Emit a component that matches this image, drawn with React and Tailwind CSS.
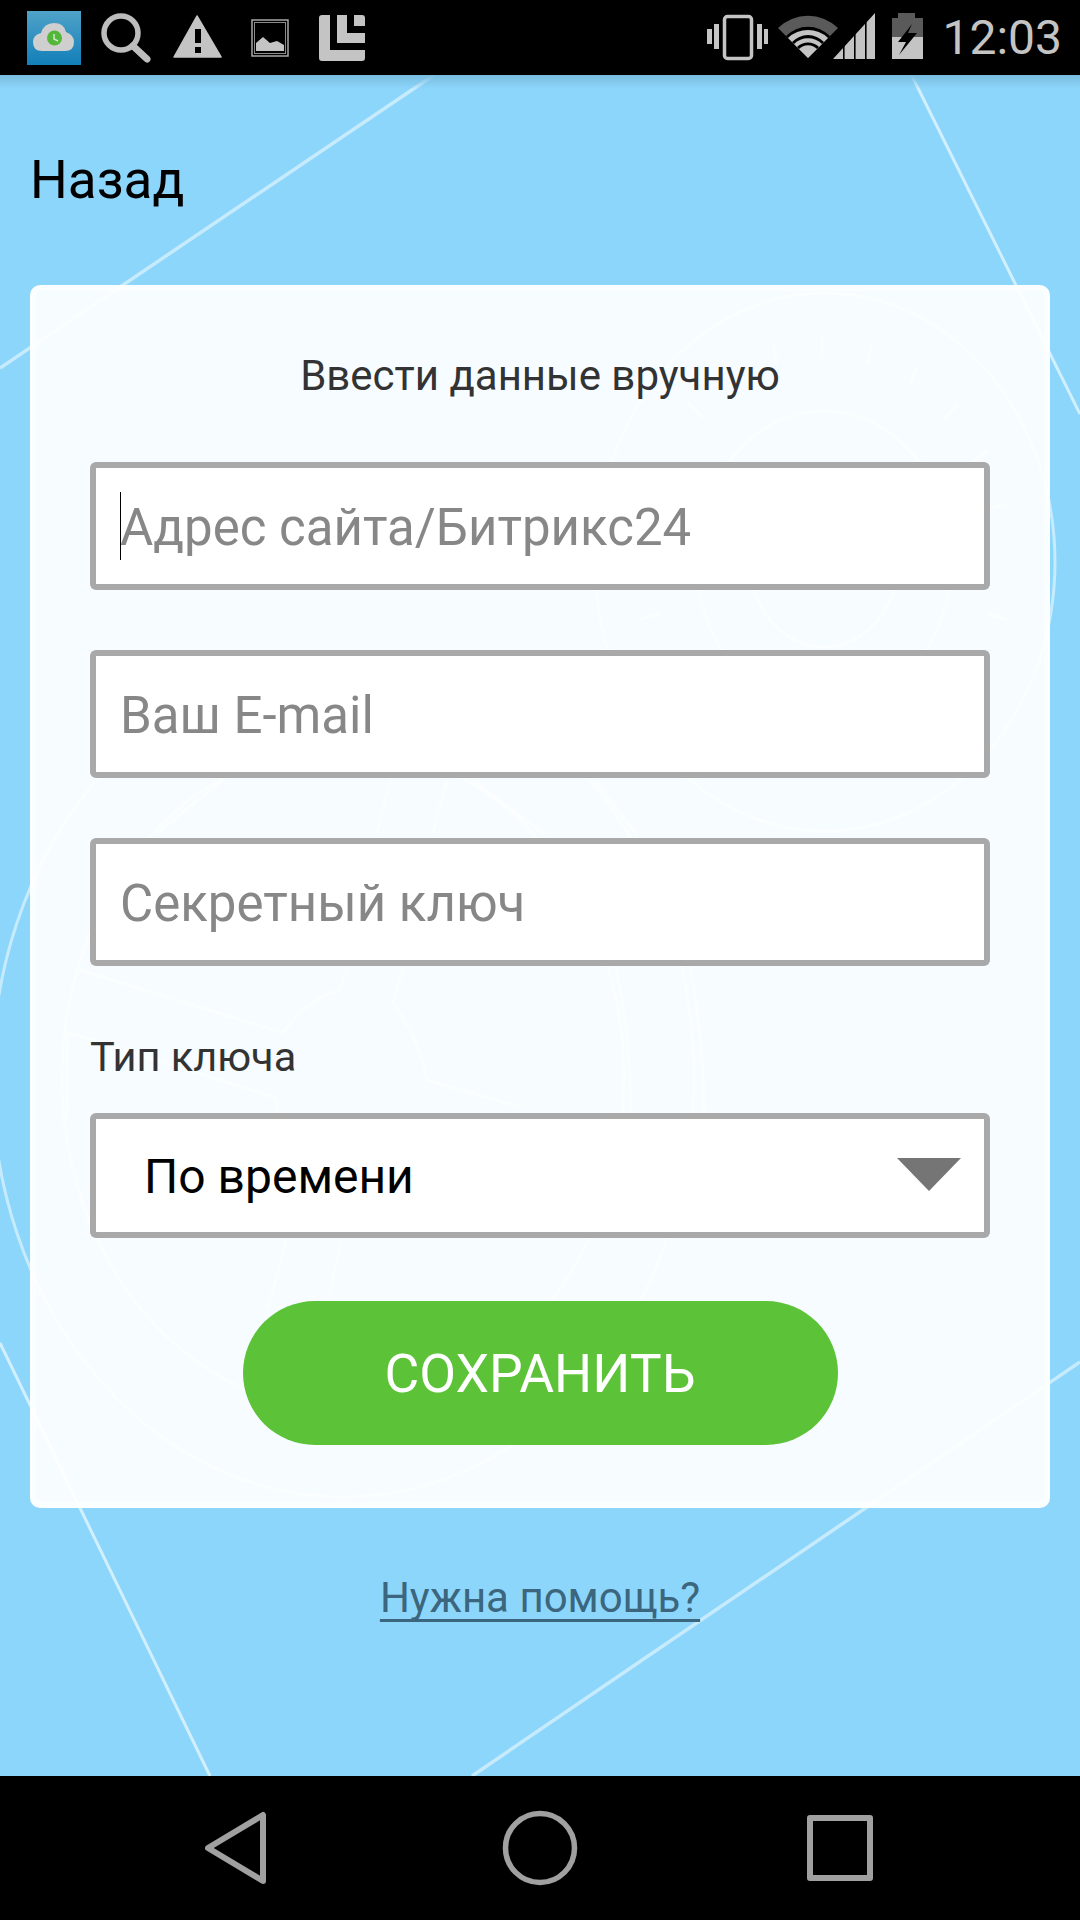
const font = { fontFamily: "Roboto, 'Noto Sans', sans-serif" };

function Background() {
  const ticks = [
    [822, 336, 822, 358], [773, 344, 777, 365], [872, 344, 867, 365], [917, 367, 910, 385],
    [958, 404, 943, 420], [688, 402, 703, 418], [987, 451, 973, 462], [1007, 504, 990, 509],
    [638, 620, 660, 613], [987, 613, 1007, 620],
  ];
  return (
    <svg className="absolute inset-0" width="1080" height="1920" viewBox="0 0 1080 1920" fill="none" stroke="#ffffff" strokeOpacity="0.5">
      <g strokeWidth="3.5">
        <path d="M434 75 L0 368" />
        <path d="M1080 1362 L472 1776" />
      </g>
      <g strokeWidth="3" strokeOpacity="0.6">
        <path d="M912 76 L1080 414" />
        <path d="M0 1343 L210 1776" />
      </g>
      <g strokeWidth="3" strokeOpacity="0.5">
        <ellipse cx="343" cy="1078" rx="351" ry="419" />
        <ellipse cx="343" cy="1078" rx="281" ry="332" />
        <ellipse cx="825" cy="562" rx="230" ry="269" />
        <ellipse cx="824" cy="561" rx="127" ry="150" />
        <ellipse cx="824" cy="561" rx="74" ry="86" />
        {ticks.map((t, i) => (
          <line key={i} x1={t[0]} y1={t[1]} x2={t[2]} y2={t[3]} />
        ))}
        <path d="M80 970 L283 1033 Q305 1000 340 990 L347 967" />
        <path d="M403 967 L393 1003 Q420 1040 427 1080 L520 1107" />
        <path d="M67 1120 L67 1032 L277 1098 L277 1113" />
        <path d="M390 780 L377 833" />
        <path d="M447 780 L433 833" />
        <path d="M223 780 L157 833" />
        <path d="M473 780 L545 835" />
        <path d="M595 780 L638 837" />
        <path d="M616 967 Q631 1040 631 1113" />
        <path d="M690 967 Q704 1040 704 1113" />
        <path d="M286 1240 L268 1310" />
        <path d="M341 1240 L329 1297" />
      </g>
    </svg>
  );
}

function LeftStatusIcons() {
  return (
    <svg width="380" height="75" viewBox="0 0 380 75" className="block">
      <defs>
        <linearGradient id="app" x1="0" y1="0" x2="0" y2="1">
          <stop offset="0" stopColor="#4fa2c8" />
          <stop offset="1" stopColor="#127fb9" />
        </linearGradient>
      </defs>
      <rect x="27" y="11" width="54" height="54" fill="url(#app)" />
      <path d="M42 51 Q33 51 33 42 Q33 35 41 33 Q44 23 54 23 Q64 23 66 32 Q74 35 74 42 Q74 51 65 51 Z" fill="#cfcfcf" />
      <circle cx="54.5" cy="38" r="7.5" fill="#53b83a" />
      <path d="M54 34 V39 L58 41" stroke="#cfe8c8" strokeWidth="1.5" fill="none" />

      <circle cx="121" cy="33" r="17" fill="none" stroke="#bdbdbd" strokeWidth="5.5" />
      <path d="M133 46 L147 59" stroke="#bdbdbd" strokeWidth="7" strokeLinecap="round" />

      <path d="M197 16 L221 57 H174 Z" fill="#c4c4c4" stroke="#c4c4c4" strokeWidth="1.5" strokeLinejoin="round" />
      <rect x="195" y="29" width="6" height="14" fill="#000" />
      <rect x="195" y="47" width="6" height="6" fill="#000" />

      <rect x="252" y="20" width="36" height="36" fill="none" stroke="#a8a8a8" strokeWidth="1.5" />
      <rect x="254.5" y="22.5" width="31" height="31" fill="none" stroke="#8a8a8a" strokeWidth="1" />
      <path d="M256 51 V43 L263 37 L270 43 L277 41 L284 45 V51 Z" fill="#c4c4c4" />

      <path d="M319 18 Q319 15 322 15 H330 V50 H365 V58 Q365 61 362 61 H322 Q319 61 319 58 Z" fill="#c4c4c4" />
      <path d="M337 15 H347 V33 H365 V43 H337 Z" fill="#c4c4c4" />
      <path d="M354 15 H362 Q365 15 365 18 V26 H354 Z" fill="#c4c4c4" />
    </svg>
  );
}

function RightStatusIcons() {
  const c = "#c4c4c4";
  const d = "#5a5a5a";
  return (
    <svg width="240" height="75" viewBox="700 0 240 75" className="block">
      <rect x="707" y="29" width="5" height="15" fill={c} />
      <rect x="714" y="24" width="5" height="25" fill={c} />
      <rect x="724.5" y="16.5" width="27" height="42" rx="3" fill="none" stroke={c} strokeWidth="3.5" />
      <rect x="757" y="24" width="5" height="25" fill={c} />
      <rect x="764" y="29" width="4" height="15" fill={c} />

      <path d="M808 58 L778 28 A43 43 0 0 1 838 28 Z" fill={d} />
      <path d="M808 58 L786 36 A31 31 0 0 1 830 36 Z" fill="#000" />
      <path d="M808 58 L788 38 A29 29 0 0 1 828 38 Z" fill={c} />
      <path d="M808 58 L792 42 A22 22 0 0 1 824 42 Z" fill="#000" />
      <path d="M808 58 L794 44 A20 20 0 0 1 822 44 Z" fill={c} />
      <path d="M808 58 L797 47 A15.5 15.5 0 0 1 819 47 Z" fill="#000" />
      <path d="M808 58 L799 49 A12.5 12.5 0 0 1 817 49 Z" fill={c} />

      <path d="M833 59 L875 13 V59 Z" fill={c} />
      <rect x="843" y="40" width="1.6" height="20" fill="#000" />
      <rect x="854" y="25" width="1.6" height="35" fill="#000" />
      <rect x="865" y="15" width="1.6" height="45" fill="#000" />

      <rect x="898" y="13" width="17" height="6" fill={d} />
      <rect x="892" y="18" width="31" height="20" fill={d} />
      <rect x="892" y="37" width="31" height="22" fill={c} />
      <path d="M912 24 L898 42 H906 L899 55 L917 33 H908 Z" fill="#000" />
    </svg>
  );
}

function Field({ placeholder, caret }) {
  return (
    <div className="relative h-[128px] w-full rounded-[6px] border-[6px] border-[#a9a9a9] bg-white">
      <input
        readOnly
        placeholder={placeholder}
        className="h-full w-full bg-transparent pl-6 pt-[3px] text-[51px] text-black outline-none placeholder:text-[#878787]"
        style={font}
      />
      {caret && <div className="absolute left-[24px] top-[24px] h-[68px] w-[1px] bg-black" />}
    </div>
  );
}

export default function App() {
  return (
    <div className="relative flex h-[1920px] w-[1080px] flex-col overflow-hidden bg-[#8dd6fb]" style={font}>
      <Background />

      <header className="relative flex h-[75px] shrink-0 items-center justify-between bg-black pr-[18px]">
        <LeftStatusIcons />
        <div className="flex items-center">
          <RightStatusIcons />
          <span className="ml-[2px] text-[48px] leading-none text-[#c4c4c4]">12:03</span>
        </div>
      </header>

      <main className="relative flex flex-1 flex-col px-[30px]">
        <div className="absolute inset-x-0 top-0 h-[14px] bg-gradient-to-b from-[#78bde0] to-[#8dd6fb]/0" />
        <div className="relative flex h-[210px] shrink-0 items-center text-[53px] leading-none text-black">
          Назад
        </div>

        <section className="relative rounded-[10px] border-[6px] border-white/50 bg-white/92 px-[54px] pt-[60px] pb-[57px]">
          <h1 className="mb-[61px] h-[50px] text-center text-[42px] font-normal leading-[50px] text-[#333333]">
            Ввести данные вручную
          </h1>
          <div className="flex flex-col gap-[60px]">
            <Field placeholder="Адрес сайта/Битрикс24" caret />
            <Field placeholder="Ваш E-mail" />
            <Field placeholder="Секретный ключ" />
          </div>
          <div className="mt-[66px] mb-[31px] h-[50px] text-[41.5px] leading-[50px] text-[#333333]">Тип ключа</div>
          <div className="flex h-[125px] items-center justify-between rounded-[6px] border-[6px] border-[#a9a9a9] bg-white pl-[48px] pr-[23px]">
            <span className="pt-[3px] text-[48px] text-black">По времени</span>
            <svg width="64" height="34" viewBox="0 0 64 34" className="block -translate-y-[1px]">
              <path d="M0 0 H64 L32 33 Z" fill="#757575" />
            </svg>
          </div>
          <button className="mx-auto mt-[63px] flex h-[144px] w-[595px] items-center justify-center rounded-full bg-[#5cc238] pt-[3px] text-[53.5px] text-white">
            СОХРАНИТЬ
          </button>
        </section>

        <a className="relative mt-[65px] block h-[50px] text-center text-[42px] leading-[50px] text-[#3b667d] underline decoration-[3px] underline-offset-[7px] [text-decoration-skip-ink:none]">
          Нужна помощь?
        </a>
      </main>

      <nav className="relative flex h-[144px] shrink-0 items-center justify-center bg-black">
        <div className="flex w-[300px] justify-center">
          <svg width="66" height="76" viewBox="0 0 66 76" fill="none" stroke="#a0a0a0" strokeWidth="6" strokeLinejoin="round" className="-translate-x-[5px]">
            <path d="M61 5 V71 L6 38 Z" />
          </svg>
        </div>
        <div className="flex w-[300px] justify-center">
          <svg width="76" height="76" viewBox="0 0 76 76" fill="none" stroke="#a0a0a0" strokeWidth="5.5">
            <circle cx="38" cy="38" r="34.5" />
          </svg>
        </div>
        <div className="flex w-[300px] justify-center">
          <svg width="68" height="68" viewBox="0 0 68 68" fill="none" stroke="#a0a0a0" strokeWidth="6" strokeLinejoin="round">
            <rect x="4" y="4" width="60" height="60" />
          </svg>
        </div>
      </nav>
    </div>
  );
}
